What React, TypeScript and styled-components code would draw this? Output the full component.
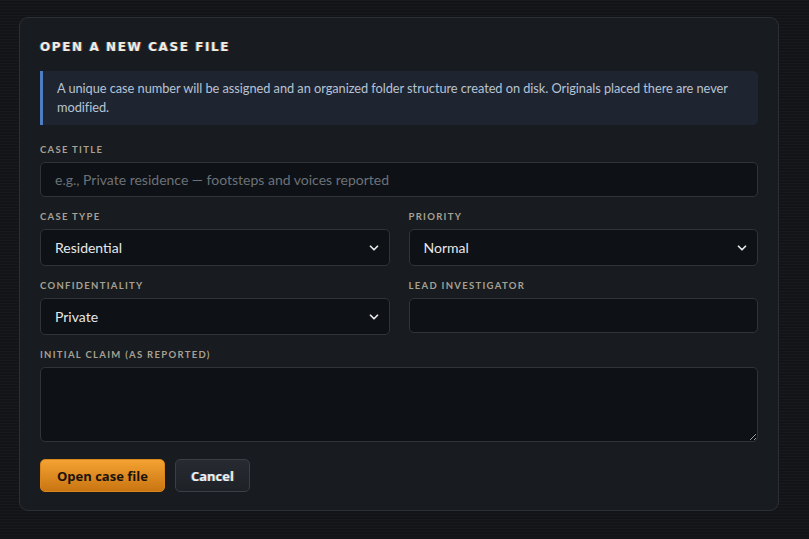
import * as React from "react";
import styled, { createGlobalStyle } from "styled-components";
import { ChevronDown } from "lucide-react";

const GlobalStyle = createGlobalStyle`
  html, body {
    margin: 0;
    padding: 0;
    min-height: 100%;
  }
  body {
    background-color: #121418;
    background-image: repeating-linear-gradient(
      to bottom,
      rgba(255, 255, 255, 0.018) 0px,
      rgba(255, 255, 255, 0.018) 1px,
      transparent 1px,
      transparent 3px
    );
    font-family: Lato, "Liberation Sans", sans-serif;
    color: #e6e8eb;
  }
`;

const Page = styled.div`
  padding: 17px 31px 27px 19px;
  min-height: 539px;
  box-sizing: border-box;
`;

const Card = styled.form`
  background: #181b1f;
  border: 1px solid #2c3036;
  border-radius: 9px;
  padding: 21px 20px 18px 20px;
  box-sizing: border-box;
  width: 760px;
`;

const Title = styled.h2`
  margin: 0 0 16px 0;
  font-family: "DejaVu Sans", Verdana, sans-serif;
  font-weight: 700;
  font-size: 12px;
  line-height: 16px;
  letter-spacing: 1.6px;
  text-transform: uppercase;
  color: #f1ede4;
  text-shadow: -1px 0 rgba(60, 190, 255, 0.45), 1px 0 rgba(255, 90, 40, 0.45);
`;

const Notice = styled.div`
  background: #1f2530;
  border-left: 3px solid #4f7dc4;
  border-radius: 0 5px 5px 0;
  padding: 8px 10px 8px 14px;
  font-size: 12.8px;
  letter-spacing: -0.05px;
  line-height: 19px;
  color: #b7c3d4;
  margin-bottom: 19px;
`;

const Row = styled.div`
  display: grid;
  grid-template-columns: 1fr 1fr;
  column-gap: 19px;
  align-items: start;
`;

const Field = styled.div<{ $last?: boolean }>`
  display: flex;
  flex-direction: column;
  margin-bottom: ${(p) => (p.$last ? "17px" : "14px")};
`;

const Label = styled.label`
  font-size: 9.5px;
  line-height: 12px;
  font-weight: 700;
  letter-spacing: 1.3px;
  text-transform: uppercase;
  color: #a7a193;
  margin-bottom: 6px;
`;

const inputBase = `
  box-sizing: border-box;
  width: 100%;
  background: #0e1115;
  border: 1px solid #30343a;
  border-radius: 5px;
  color: #e6e8eb;
  font-family: Lato, "Liberation Sans", sans-serif;
  font-size: 14px;
  padding: 0 14px;
  outline: none;
`;

const TextInput = styled.input`
  ${inputBase}
  height: 35px;
  &::placeholder {
    color: #6c7179;
  }
`;

const SelectWrap = styled.div`
  position: relative;
`;

const Select = styled.select`
  ${inputBase}
  height: 37px;
  appearance: none;
  -webkit-appearance: none;
  cursor: pointer;
`;

const Chevron = styled.span`
  position: absolute;
  right: 9px;
  top: 50%;
  transform: translateY(-50%);
  display: flex;
  pointer-events: none;
  color: #e8e8e8;
`;

const TextArea = styled.textarea`
  ${inputBase}
  height: 75px;
  padding: 10px 14px;
  resize: vertical;
  display: block;
`;

const Actions = styled.div`
  display: flex;
  gap: 10px;
`;

const Button = styled.button<{ $primary?: boolean }>`
  height: 33px;
  padding: 0 ${(p) => (p.$primary ? "16px" : "15px")};
  border-radius: 5px;
  font-family: "Open Sans", Lato, sans-serif;
  font-weight: 700;
  font-size: 13px;
  cursor: pointer;
  border: 1px solid ${(p) => (p.$primary ? "#d7861c" : "#3a3e45")};
  background: ${(p) =>
    p.$primary
      ? "linear-gradient(to bottom, #f4a232, #c97512)"
      : "linear-gradient(to bottom, #272a30, #1e2126)"};
  color: ${(p) => (p.$primary ? "#1b1309" : "#eef0f3")};
  text-shadow: ${(p) =>
    p.$primary
      ? "none"
      : "-1px 0 rgba(60, 190, 255, 0.45), 1px 0 rgba(255, 90, 40, 0.35)"};
`;

const SelectField = (props: { value: string; options: string[] }) => (
  <SelectWrap>
    <Select defaultValue={props.value}>
      {props.options.map((o) => (
        <option key={o}>{o}</option>
      ))}
    </Select>
    <Chevron>
      <ChevronDown size={14} strokeWidth={3} />
    </Chevron>
  </SelectWrap>
);

const App = () => (
  <Page>
    <GlobalStyle />
    <Card onSubmit={(e) => e.preventDefault()}>
      <Title>Open a new case file</Title>
      <Notice>
        A unique case number will be assigned and an organized folder
        structure created on disk. Originals placed there are never modified.
      </Notice>
      <Field>
        <Label>Case title</Label>
        <TextInput placeholder="e.g., Private residence — footsteps and voices reported" />
      </Field>
      <Row>
        <Field>
          <Label>Case type</Label>
          <SelectField
            value="Residential"
            options={["Residential", "Commercial", "Outdoor", "Historic site"]}
          />
        </Field>
        <Field>
          <Label>Priority</Label>
          <SelectField value="Normal" options={["Low", "Normal", "High", "Urgent"]} />
        </Field>
        <Field>
          <Label>Confidentiality</Label>
          <SelectField value="Private" options={["Public", "Private", "Restricted"]} />
        </Field>
        <Field>
          <Label>Lead investigator</Label>
          <TextInput />
        </Field>
      </Row>
      <Field $last>
        <Label>Initial claim (as reported)</Label>
        <TextArea />
      </Field>
      <Actions>
        <Button $primary type="submit">
          Open case file
        </Button>
        <Button type="button">Cancel</Button>
      </Actions>
    </Card>
  </Page>
);

export default App;
